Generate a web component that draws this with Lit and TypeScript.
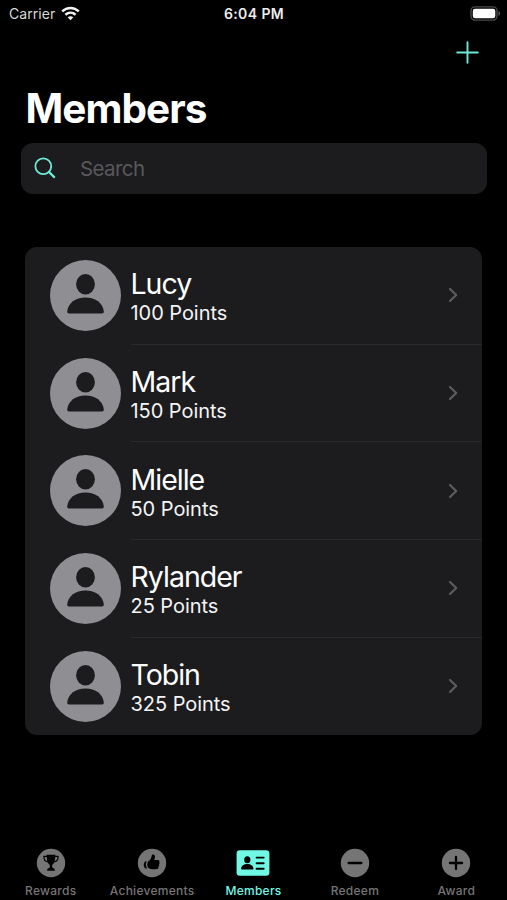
import { LitElement, html, css, svg } from "lit";
import { customElement, property } from "lit/decorators.js";

const members = [
  { name: "Lucy", points: 100 },
  { name: "Mark", points: 150 },
  { name: "Mielle", points: 50 },
  { name: "Rylander", points: 25 },
  { name: "Tobin", points: 325 },
];

const disc = svg`<circle cx="15" cy="15" r="14.2" fill="currentColor"/>`;

const tabs = [
  {
    label: "Rewards",
    art: svg`${disc}
      <path d="M10.7 6.800h8.600c0 5.200-.9 8.900-3.100 9.900v2.500c0 1 2.600 1 2.600 2.300v1.300h-7.600v-1.300c0-1.300 2.600-1.300 2.600-2.300v-2.500c-2.200-1-3.100-4.700-3.100-9.900z" fill="#000"/>
      <path d="M11 8.400H7.900c0 3.400 1.700 5.300 4.500 5.600M19 8.400h3.100c0 3.400-1.700 5.300-4.500 5.600" fill="none" stroke="#000" stroke-width="1.200" stroke-linejoin="round"/>`,
  },
  {
    label: "Achievements",
    art: svg`${disc}
      <path d="M11.300 13.200c2.100-1.500 2.900-2.900 3.300-5.300.3-2 3-2 3.300.2.200 1.500-.2 2.700-.7 3.900h3.700c1.500 0 2 1.500 1.200 2.300.7.700.6 1.800-.1 2.300.4.900.1 1.700-.6 2.100.3 1-.2 2.100-1.300 2.300-3.300.6-6.700.5-8.700-1-1.600-1.700-1.500-5-.1-6.800z" fill="#000"/>
      <path d="M9.700 13.300H8.500c-2.300 1.800-2.300 5.400 0 7.300h1.700c-1.600-2.200-1.700-5-.5-7.300z" fill="#000"/>`,
  },
  {
    label: "Members",
    active: true,
    art: svg`<rect x="-1.400" y="2.200" width="32.800" height="25.600" rx="3.200" fill="currentColor"/>
      <ellipse cx="9.300" cy="11.800" rx="3.100" ry="3.500" fill="#000"/>
      <path d="M3.100 20.600c.3-3.100 2.900-4.600 6.200-4.600s5.900 1.500 6.200 4.600c0 .5-.3.900-.8.900H3.900c-.5 0-.8-.4-.8-.9z" fill="#000"/>
      <path d="M18.600 9.600h7.100M18.600 15.200h7.100M18.600 20.700h7.100" stroke="#000" stroke-width="1.900" stroke-linecap="round"/>`,
  },
  {
    label: "Redeem",
    art: svg`${disc}<path d="M8.600 15h12.800" stroke="#000" stroke-width="2.300" stroke-linecap="round"/>`,
  },
  {
    label: "Award",
    art: svg`${disc}<path d="M8.900 15h12.200M15 8.900v12.200" stroke="#000" stroke-width="2.300" stroke-linecap="round"/>`,
  },
];

@customElement("member-row")
export class MemberRow extends LitElement {
  @property() name = "";
  @property({ type: Number }) points = 0;

  static styles = css`
    :host {
      display: flex;
      height: 97.7px;
      box-sizing: border-box;
      padding-left: 25px;
      gap: 9.500px;
    }
    .avatar {
      width: 71px;
      height: 71px;
      margin-top: 13px;
      flex: none;
    }
    .content {
      flex: 1;
      display: flex;
      align-items: center;
      justify-content: space-between;
      box-sizing: border-box;
      border-bottom: 1px solid #29292b;
      padding-right: 23px;
    }
    :host(:last-of-type) .content {
      border-bottom-color: transparent;
    }
    .text {
      padding-top: 5px;
    }
    .name {
      font-size: 28.500px;
      line-height: 32px;
      letter-spacing: -1px;
      color: #fff;
    }
    .points {
      font-size: 20px;
      line-height: 27px;
      letter-spacing: -0.050px;
      color: #f4f4f5;
    }
    .chevron {
      width: 12px;
      height: 18px;
    }
  `;

  render() {
    return html`
      <svg class="avatar" viewBox="0 0 71 71">
        <circle cx="35.500" cy="35.500" r="35.500" fill="#8e8e93" />
        <ellipse cx="35.500" cy="24.300" rx="9.400" ry="10.200" fill="#1c1c1e" />
        <path d="M17.200 51.500c.8-8.500 8.300-14.100 18.300-14.100s17.500 5.600 18.300 14.100c.1 1.300-.6 2-1.800 2H19c-1.200 0-1.900-.7-1.800-2z" fill="#1c1c1e" />
      </svg>
      <div class="content">
        <div class="text">
          <div class="name">${this.name}</div>
          <div class="points">${this.points} Points</div>
        </div>
        <svg class="chevron" viewBox="0 0 12 18">
          <path d="M3 3l6.200 6L3 15" fill="none" stroke="#5b5b5f" stroke-width="2.300" stroke-linecap="round" stroke-linejoin="round" />
        </svg>
      </div>
    `;
  }
}

@customElement("app-root")
export class AppRoot extends LitElement {
  static styles = css`
    :host {
      display: flex;
      flex-direction: column;
      height: 900px;
      overflow: hidden;
      background: #000;
      color: #fff;
      font-family: Inter, "Liberation Sans", sans-serif;
    }
    .status {
      display: grid;
      grid-template-columns: 1fr auto 1fr;
      align-items: center;
      height: 27px;
      padding: 0 6px 0 9px;
      flex: none;
    }
    .carrier {
      display: flex;
      align-items: center;
      gap: 6px;
      font-size: 14px;
      letter-spacing: 0.050px;
      color: #d8d8d8;
    }
    .wifi {
      width: 19px;
      height: 15px;
      margin-top: -1px;
    }
    .time {
      margin-left: -2px;
      font-size: 14px;
      font-weight: 600;
      letter-spacing: 0.400px;
      color: #ececec;
    }
    .battery {
      width: 31px;
      height: 15px;
      justify-self: end;
    }
    .nav {
      display: flex;
      justify-content: flex-end;
      height: 51px;
      padding: 14px 28px 0 0;
      box-sizing: border-box;
      flex: none;
    }
    .add {
      width: 23px;
      height: 23px;
    }
    .title {
      margin: 6px 0 0 25.500px;
      font-size: 40.500px;
      font-weight: 700;
      line-height: 50px;
      letter-spacing: -0.950px;
    }
    .search {
      display: flex;
      align-items: center;
      height: 51px;
      margin: 9px 20px 0 20.500px;
      padding-left: 13.500px;
      gap: 24px;
      border-radius: 12px;
      background: #1c1c1e;
      color: #58585b;
      font-size: 20.500px;
      letter-spacing: -0.600px;
      flex: none;
    }
    .lens {
      width: 22px;
      height: 22px;
      margin-top: -1px;
    }
    .list {
      margin: 53px 25px 0;
      border-radius: 12px;
      background: #1c1c1e;
      overflow: hidden;
      flex: none;
    }
    .tabs {
      display: grid;
      grid-template-columns: repeat(5, 1fr);
      margin-top: auto;
      height: 52px;
      flex: none;
    }
    .tab {
      display: flex;
      flex-direction: column;
      align-items: center;
      color: #757575;
      font-size: 12px;
      font-weight: 500;
      line-height: 16px;
      letter-spacing: 0.260px;
    }
    .active {
      color: #70f8e5;
    }
    .icon {
      width: 30px;
      height: 30px;
      overflow: visible;
      margin-bottom: 5px;
    }
  `;

  render() {
    return html`
      <div class="status">
        <div class="carrier">
          <span>Carrier</span>
          <svg class="wifi" viewBox="0 0 19 15">
            <g fill="none" stroke="#f2f2f2" stroke-width="2.500">
              <path d="M1.200 5.400C6 .8 13 .8 17.800 5.400" />
              <path d="M4.400 8.800c3-2.700 7.200-2.700 10.200 0" />
            </g>
            <path d="M6.700 11.300c1.700-1.400 3.900-1.400 5.600 0L9.500 14.200z" fill="#f2f2f2" />
          </svg>
        </div>
        <div class="time">6:04 PM</div>
        <svg class="battery" viewBox="0 0 31 15">
          <rect x="1" y="0.900" width="26" height="13.200" rx="4" fill="none" stroke="#4c4c4e" stroke-width="1.400" />
          <rect x="2.800" y="2.800" width="22.500" height="9.400" rx="2.300" fill="#fff" />
          <path d="M28.500 5.200c2 .7 2 3.900 0 4.600z" fill="#606062" />
        </svg>
      </div>
      <div class="nav">
        <svg class="add" viewBox="0 0 23 23">
          <path d="M1.200 11.500h20.600M11.500 1.200v20.600" stroke="#6ee9d9" stroke-width="1.900" stroke-linecap="round" />
        </svg>
      </div>
      <div class="title">Members</div>
      <div class="search">
        <svg class="lens" viewBox="0 0 22 22">
          <circle cx="9.300" cy="9.300" r="7.900" fill="none" stroke="#70ead8" stroke-width="1.800" />
          <path d="M14.900 14.900l5.300 5.200" stroke="#70ead8" stroke-width="2.200" stroke-linecap="round" />
        </svg>
        <span>Search</span>
      </div>
      <div class="list">
        ${members.map((m) => html`<member-row .name=${m.name} .points=${m.points}></member-row>`)}
      </div>
      <div class="tabs">
        ${tabs.map(
          (t) => html`<div class="tab ${t.active ? "active" : ""}">
            <svg class="icon" viewBox="0 0 30 30">${t.art}</svg>
            <span>${t.label}</span>
          </div>`
        )}
      </div>
    `;
  }
}
